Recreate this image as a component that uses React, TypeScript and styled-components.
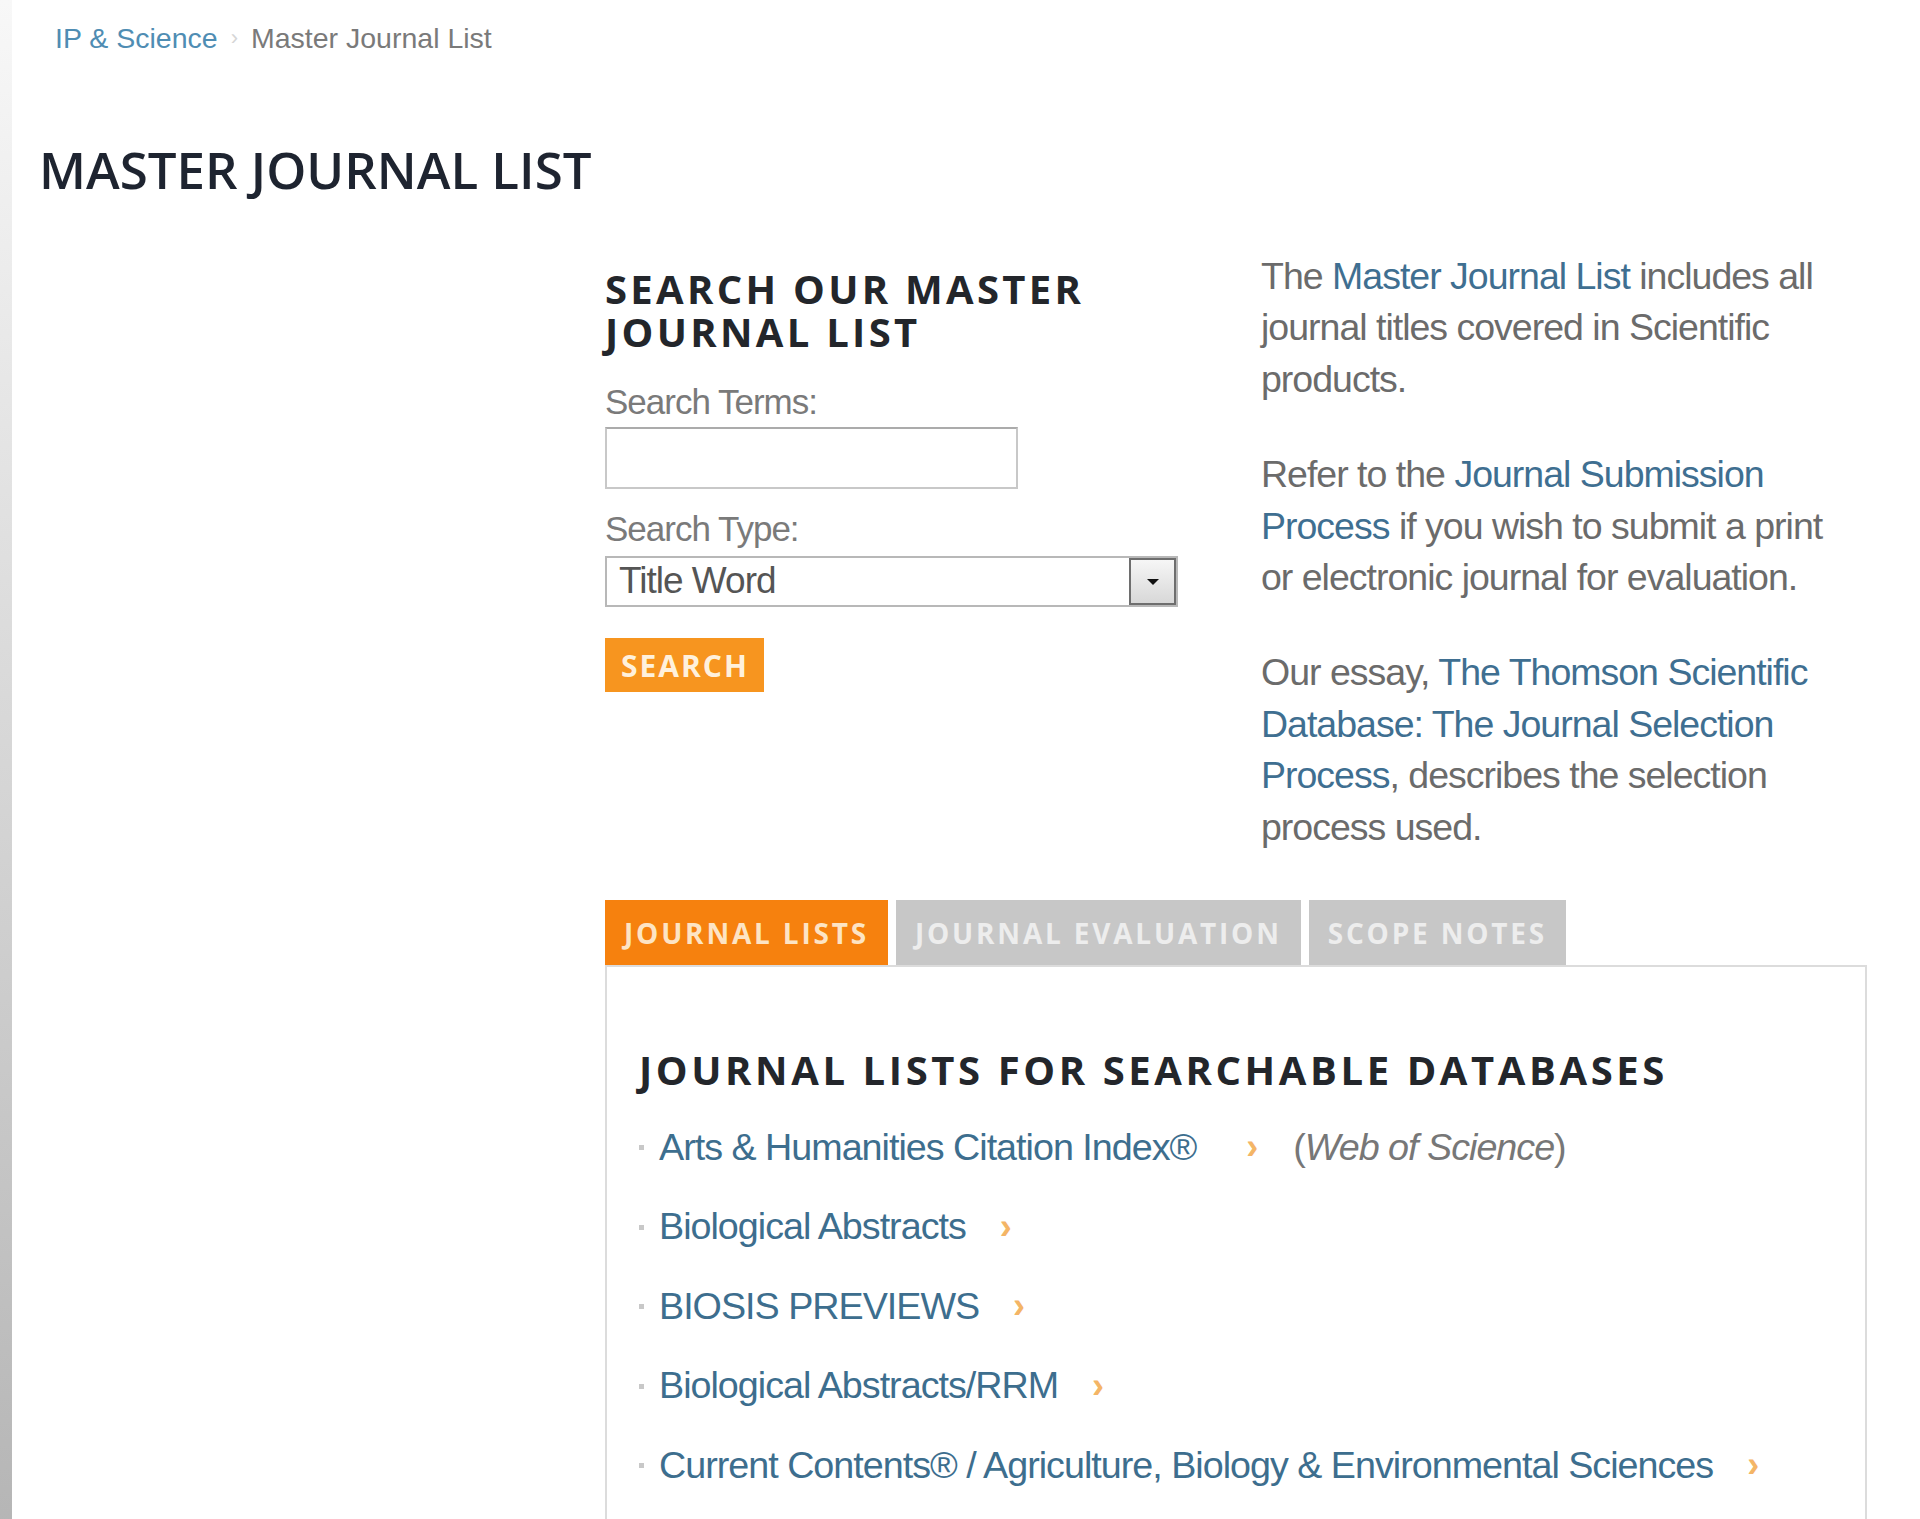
import React from "react";
import styled, { createGlobalStyle } from "styled-components";

const BODY_FONT = `"Liberation Sans", Arial, sans-serif`;
const HEAD_FONT = `"Open Sans", "Noto Sans", "Liberation Sans", sans-serif`;

const GlobalStyle = createGlobalStyle`
  html, body { margin: 0; padding: 0; background: #ffffff; }
  body { font-family: "Liberation Sans", Arial, sans-serif; }
  *, *::before, *::after { box-sizing: border-box; }
`;

const Page = styled.div`
  display: flex;
  min-height: 100vh;
`;

const EdgeShade = styled.div`
  flex: 0 0 12px;
  background: linear-gradient(to bottom, #f8f8f8 0%, #dcdcdc 40%, #b4b4b4 100%);
`;

const Main = styled.div`
  flex: 1;
  padding-left: 27px;
`;

const Breadcrumb = styled.nav`
  display: flex;
  align-items: center;
  padding: 21px 0 0 16px;
  font-family: "Liberation Sans", Arial, sans-serif;
  font-size: 28.5px;
  line-height: 34px;
`;

const CrumbLink = styled.a`
  color: #4f8db3;
  text-decoration: none;
`;

const CrumbSep = styled.span`
  color: #d6d6d6;
  margin: 0 13px;
  font-size: 22px;
`;

const CrumbCurrent = styled.span`
  color: #7a7a7a;
`;

const Title = styled.h1`
  margin: 84px 0 0;
  font-family: ${HEAD_FONT};
  font-weight: 600;
  font-size: 51px;
  line-height: 61px;
  color: #1e2430;
`;

const ContentGrid = styled.div`
  display: grid;
  grid-template-columns: 566px 1262px;
  margin-top: 51px;
`;

const LeftNav = styled.aside``;

const MainColumn = styled.div`
  display: flex;
  flex-direction: column;
`;

const TopRow = styled.div`
  display: grid;
  grid-template-columns: 656px 580px;
`;

const SearchForm = styled.form`
  padding-top: 16px;
  display: flex;
  flex-direction: column;
  align-items: flex-start;
`;

const SectionHeading = styled.h2`
  margin: 0;
  max-width: 560px;
  font-family: ${HEAD_FONT};
  font-weight: 700;
  font-size: 40px;
  line-height: 43px;
  letter-spacing: 3.3px;
  color: #23262b;
  text-transform: uppercase;
`;

const FieldLabel = styled.label<{ $gap: number }>`
  margin-top: ${(p) => p.$gap}px;
  font-family: ${BODY_FONT};
  font-size: 35px;
  letter-spacing: -1px;
  line-height: 46px;
  color: #7a7a7a;
`;

const TextInput = styled.input`
  margin-top: 2px;
  width: 413px;
  height: 62px;
  border: 2px solid #c8c8c8;
  border-top-color: #ababab;
  background: #fff;
  outline: none;
`;

const SelectBox = styled.div`
  margin-top: 4px;
  width: 573px;
  height: 51px;
  display: flex;
  border: 2px solid #b8b8b8;
  background: #fff;
`;

const SelectValue = styled.span`
  flex: 1;
  padding-left: 12px;
  font-family: ${BODY_FONT};
  font-size: 37px;
  letter-spacing: -1px;
  line-height: 46px;
  color: #555;
`;

const SelectArrow = styled.span`
  flex: 0 0 47px;
  display: flex;
  align-items: center;
  justify-content: center;
  border: 2px solid #6e6e6e;
  background: linear-gradient(to bottom, #f6f6f6, #d8d8d8);
`;

const SearchButton = styled.button`
  margin-top: 31px;
  height: 54px;
  padding: 0 15px 0 16px;
  border: none;
  background: #f7951f;
  color: #fff1dc;
  font-family: ${HEAD_FONT};
  font-weight: 700;
  font-size: 30px;
  letter-spacing: 2px;
  cursor: pointer;
`;

const Info = styled.div`
  font-family: ${BODY_FONT};
  font-size: 37.5px;
  letter-spacing: -1px;
  line-height: 51.4px;
  color: #6b6b6b;
`;

const InfoPara = styled.p`
  margin: 0 0 44px;
`;

const InfoLink = styled.a`
  color: #3f6f91;
  text-decoration: none;
`;

const TabBar = styled.div`
  display: flex;
  gap: 8px;
  margin-top: 3px;
`;

const Tab = styled.div<{ $active?: boolean }>`
  height: 65px;
  padding: 0 19px;
  display: flex;
  align-items: center;
  background: ${(p) => (p.$active ? "#f6810e" : "#c7c7c7")};
  color: ${(p) => (p.$active ? "#fde4c4" : "#ededed")};
  font-family: ${HEAD_FONT};
  font-weight: 700;
  font-size: 28px;
  letter-spacing: 2.8px;
  text-transform: uppercase;
`;

const Panel = styled.section`
  border: 2px solid #dcdcdc;
  border-bottom: none;
  padding: 79px 0 40px 32px;
`;

const PanelHeading = styled(SectionHeading)`
  max-width: none;
  line-height: 48px;
  letter-spacing: 3.6px;
`;

const DbList = styled.ul`
  list-style: none;
  margin: 28px 0 0;
  padding: 0;
`;

const DbItem = styled.li`
  position: relative;
  display: flex;
  align-items: center;
  height: 50px;
  margin-bottom: 29.6px;
  padding-left: 20px;
  font-family: ${BODY_FONT};
  font-size: 37.7px;
  letter-spacing: -1px;
  color: #777;
  &::before {
    content: "";
    position: absolute;
    left: 0;
    top: 50%;
    width: 5px;
    height: 5px;
    margin-top: -2px;
    background: #c8c8c8;
  }
`;

const DbLink = styled.a`
  color: #3d6e8e;
  text-decoration: none;
`;

const Chevron = styled.span<{ $gap: number }>`
  margin-left: ${(p) => p.$gap}px;
  color: #f4b566;
  font-size: 36px;
  font-weight: 700;
`;

const Platform = styled.span`
  margin-left: 36px;
  color: #777;
  em {
    font-style: italic;
  }
`;

const databases = [
  { name: "Arts & Humanities Citation Index®", gap: 50, platform: "Web of Science" },
  { name: "Biological Abstracts", gap: 34 },
  { name: "BIOSIS PREVIEWS", gap: 34 },
  { name: "Biological Abstracts/RRM", gap: 34 },
  { name: "Current Contents® / Agriculture, Biology & Environmental Sciences", gap: 34 },
];

export default function App() {
  return (
    <>
      <GlobalStyle />
      <Page>
        <EdgeShade />
        <Main>
          <Breadcrumb>
            <CrumbLink href="#">IP &amp; Science</CrumbLink>
            <CrumbSep>›</CrumbSep>
            <CrumbCurrent>Master Journal List</CrumbCurrent>
          </Breadcrumb>
          <Title>MASTER JOURNAL LIST</Title>
          <ContentGrid>
            <LeftNav />
            <MainColumn>
              <TopRow>
                <SearchForm onSubmit={(e) => e.preventDefault()}>
                  <SectionHeading>Search our master journal list</SectionHeading>
                  <FieldLabel $gap={26} htmlFor="terms">Search Terms:</FieldLabel>
                  <TextInput id="terms" type="text" />
                  <FieldLabel $gap={17}>Search Type:</FieldLabel>
                  <SelectBox>
                    <SelectValue>Title Word</SelectValue>
                    <SelectArrow>
                      <svg width="14" height="8" viewBox="0 0 14 8">
                        <path d="M1 1 L13 1 L7 7 Z" fill="#111" />
                      </svg>
                    </SelectArrow>
                  </SelectBox>
                  <SearchButton type="submit">SEARCH</SearchButton>
                </SearchForm>
                <Info>
                  <InfoPara>
                    The <InfoLink href="#">Master Journal List</InfoLink> includes all journal titles covered in
                    Scientific products.
                  </InfoPara>
                  <InfoPara>
                    Refer to the <InfoLink href="#">Journal Submission Process</InfoLink> if you wish to submit a
                    print or electronic journal for evaluation.
                  </InfoPara>
                  <InfoPara>
                    Our essay,{" "}
                    <InfoLink href="#">
                      The Thomson Scientific Database: The Journal Selection Process
                    </InfoLink>
                    , describes the selection process used.
                  </InfoPara>
                </Info>
              </TopRow>
              <TabBar>
                <Tab $active>Journal Lists</Tab>
                <Tab>Journal Evaluation</Tab>
                <Tab>Scope Notes</Tab>
              </TabBar>
              <Panel>
                <PanelHeading>Journal lists for searchable databases</PanelHeading>
                <DbList>
                  {databases.map((db) => (
                    <DbItem key={db.name}>
                      <DbLink href="#">{db.name}</DbLink>
                      <Chevron $gap={db.gap}>›</Chevron>
                      {db.platform && (
                        <Platform>
                          (<em>{db.platform}</em>)
                        </Platform>
                      )}
                    </DbItem>
                  ))}
                </DbList>
              </Panel>
            </MainColumn>
          </ContentGrid>
        </Main>
      </Page>
    </>
  );
}
